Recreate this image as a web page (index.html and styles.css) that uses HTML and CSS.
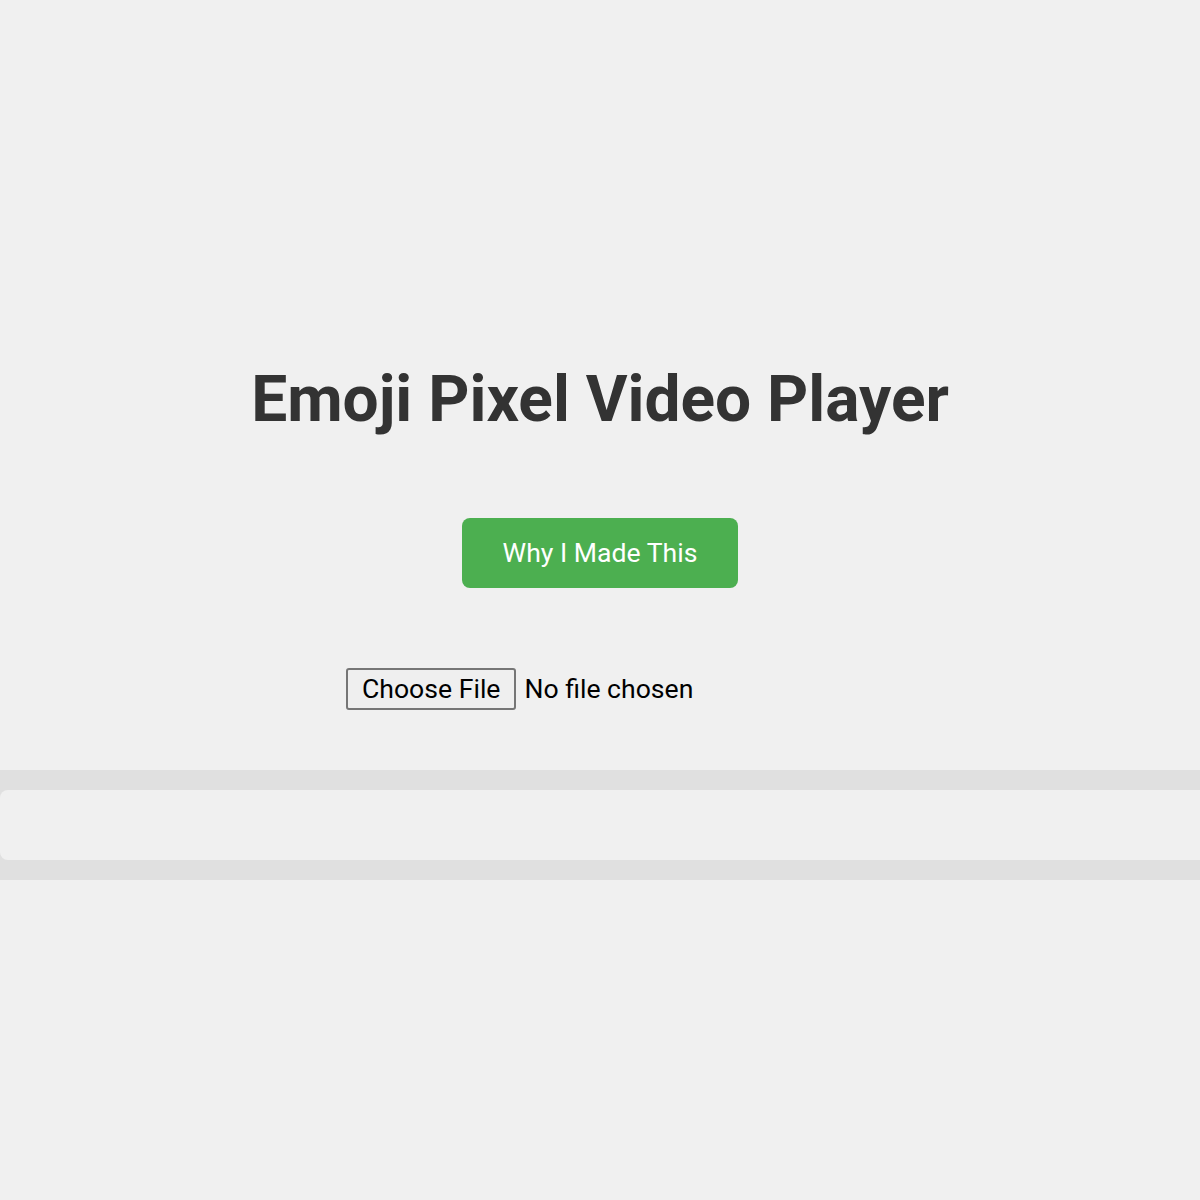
FILE: index.html
```html
<!DOCTYPE html>
<html>
<head>
<meta charset="utf-8">
<link rel="stylesheet" href="styles.css">
</head>
<body>
<main class="page">
  <h1 class="title">Emoji Pixel Video Player</h1>
  <button class="why">Why I Made This</button>
  <div class="upload">
    <input class="file" type="file">
  </div>
  <section class="strip">
    <div class="track"></div>
  </section>
</main>
</body>
</html>
```
FILE: styles.css
```css
html, body {
  margin: 0;
  padding: 0;
  background: #f0f0f0;
}
body {
  font-family: Roboto, "Liberation Sans", sans-serif;
  width: 1200px;
  height: 1200px;
  overflow: hidden;
}
.page {
  display: flex;
  flex-direction: column;
  align-items: center;
  padding-top: 355px;
}
.title {
  margin: 0;
  font-size: 64px;
  font-weight: 700;
  color: #333333;
  line-height: 90px;
}
.why {
  margin-top: 73px;
  width: 276px;
  height: 70px;
  border: none;
  border-radius: 8px;
  background: #4caf50;
  color: #ffffff;
  font-family: Roboto, "Liberation Sans", sans-serif;
  font-size: 26.6px;
  padding: 0 0 2px;
}
.upload {
  margin-top: 80px;
  width: 508px;
  display: flex;
}
.file {
  font-family: Roboto, "Liberation Sans", sans-serif;
  font-size: 26.6px;
  color: #000;
  line-height: 40px;
}
.file::file-selector-button {
  font-family: Roboto, "Liberation Sans", sans-serif;
  font-size: 26.6px;
  height: 42px;
  padding: 0 14px 2px;
  margin-right: 8px;
  border: 2px solid #767676;
  border-radius: 3px;
  background: #efefef;
  color: #000;
}
.strip {
  margin-top: 60px;
  align-self: stretch;
  background: #e0e0e0;
  padding: 20px 0;
  overflow: hidden;
}
.track {
  height: 70px;
  width: calc(100% + 20px);
  background: #f0f0f0;
  border-radius: 8px;
}
```
